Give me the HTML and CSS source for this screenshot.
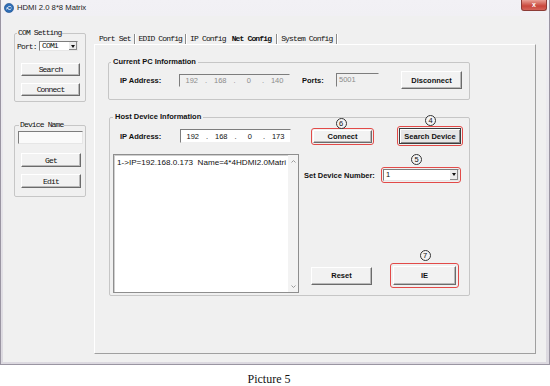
FILE: index.html
```html
<!DOCTYPE html>
<html lang="en">
<head>
    <meta charset="UTF-8">
    <meta name="viewport" content="width=device-width, initial-scale=1.0">
    <title>HDMI 2.0 8*8 Matrix</title>
    <link rel="stylesheet" href="styles.css">
</head>
<body>

    <div class="window">
        <div class="titlebar">
            <svg class="app-icon" width="10" height="10" viewBox="0 0 10 10">
                <circle cx="5" cy="5" r="4.6" fill="#2f6db6" stroke="#1d4f8c" stroke-width="0.6"/>
                <path d="M2.6 6.4 C3.4 3.2 6.4 2.8 7.4 4.2 M3 4.6 C4.2 6.8 6.4 7 7.3 5.6" fill="none" stroke="#fff" stroke-width="0.9"/>
            </svg>
            <span class="title">HDMI 2.0 8*8 Matrix</span>
            <div class="close">x</div>
        </div>

        <div class="client">
            <!-- serial port + device name -->
            <div class="sidebar">
                <fieldset class="group com-group">
                    <legend class="mono">COM Setting</legend>
                    <div class="port-row">
                        <span class="mono port-lbl">Port:</span>
                        <div class="combo com-combo"><span class="mono">COM1</span><i class="drop"></i></div>
                    </div>
                    <button class="btn mono side-btn first">Search</button>
                    <button class="btn mono side-btn">Connect</button>
                </fieldset>

                <fieldset class="group name-group">
                    <legend class="mono">Device Name</legend>
                    <div class="textbox"></div>
                    <button class="btn mono side-btn get">Get</button>
                    <button class="btn mono side-btn">Edit</button>
                </fieldset>
            </div>

            <div class="tabs-area">
                <div class="tabs mono">
                    <span class="tab">Port Set</span><span class="sep"></span>
                    <span class="tab">EDID Config</span><span class="sep"></span>
                    <span class="tab">IP Config</span>
                    <span class="tab active">Net Config</span><span class="sep"></span>
                    <span class="tab">System Config</span><span class="sep"></span>
                </div>

                <div class="panel">
                    <fieldset class="group pc-group">
                        <legend class="bold">Current PC Information</legend>
                        <div class="pc-row">
                            <span class="bold lbl">IP Address:</span>
                            <div class="ip off">
                                <span>192</span><b>.</b><span>168</span><b>.</b><span>0</span><b>.</b><span>140</span>
                            </div>
                            <span class="bold ports-lbl">Ports:</span>
                            <div class="port-field">5001</div>
                            <button class="btn bold disconnect">Disconnect</button>
                        </div>
                    </fieldset>

                    <fieldset class="group host-group">
                        <legend class="bold">Host Device Information</legend>
                        <div class="host-top">
                            <span class="bold lbl host-lbl">IP Address:</span>
                            <div class="ip">
                                <span>192</span><b>.</b><span>168</span><b>.</b><span>0</span><b>.</b><span>173</span>
                            </div>
                            <div class="mark connect-mark">
                                <span class="num n6">6</span>
                                <button class="btn bold">Connect</button>
                            </div>
                            <div class="mark search-mark">
                                <span class="num n4">4</span>
                                <button class="btn bold default">Search Device</button>
                            </div>
                        </div>

                        <div class="host-body">
                            <div class="listbox">
                                <div class="list-items">1-&gt;IP=192.168.0.173&nbsp;&nbsp;Name=4*4HDMI2.0Matri</div>
                                <div class="vscroll">
                                    <svg width="5" height="3" viewBox="0 0 5 3"><path d="M0.5 2.5 L2.5 0.5 L4.5 2.5" fill="none" stroke="#9a9a9a"/></svg>
                                    <svg width="5" height="3" viewBox="0 0 5 3"><path d="M0.5 0.5 L2.5 2.5 L4.5 0.5" fill="none" stroke="#9a9a9a"/></svg>
                                </div>
                            </div>

                            <div class="host-side">
                                <div class="devnum-row">
                                    <span class="bold devnum-lbl">Set Device Number:</span>
                                    <div class="mark combo-mark">
                                        <span class="num n5">5</span>
                                        <div class="combo num-combo"><span>1</span><i class="drop"></i></div>
                                    </div>
                                </div>
                                <div class="btn-row">
                                    <button class="btn bold reset">Reset</button>
                                    <div class="mark ie-mark">
                                        <span class="num n7">7</span>
                                        <button class="btn bold">IE</button>
                                    </div>
                                </div>
                            </div>
                        </div>
                    </fieldset>
                </div>
            </div>
        </div>
    </div>

    <p class="caption">Picture 5</p>

</body>
</html>
```

FILE: styles.css
```css
* { box-sizing: border-box; margin: 0; padding: 0; }
body {
    width: 550px;
    height: 386px;
    overflow: hidden;
    background: #fff;
    font-family: "Liberation Sans", Arial, sans-serif;
    color: #111;
}

.mono { font-family: "Liberation Mono", monospace; font-size: 8px; letter-spacing: -0.85px; }
.bold { font-family: "Liberation Sans", Arial, sans-serif; font-size: 7.5px; font-weight: bold; }

/* window frame */
.window {
    height: 365px;
    display: flex;
    flex-direction: column;
    background: linear-gradient(#f2f1f5, #dcd9e0);
    border: 1px solid #9a95a2;
    border-top: none;
    padding: 0 3px 2px 2px;
}

.titlebar {
    height: 16px;
    display: flex;
    align-items: flex-start;
}
.app-icon { margin: 3px 0 0 1px; }
.title { font-size: 7.7px; color: #222; margin: 3px 0 0 3px; line-height: 9px; }
.close {
    margin-left: auto;
    margin-right: -1px;
    width: 26px;
    height: 11px;
    background: linear-gradient(#e9a196, #c9473b 60%, #d5655a);
    border: 1px solid #8c3b35;
    border-top: none;
    border-radius: 0 0 3px 3px;
    color: #fff;
    font-size: 7px;
    font-weight: bold;
    text-align: center;
    line-height: 9px;
}

.client {
    flex: 1;
    display: flex;
    background: #f0f0f0;
}

/* group boxes */
.group {
    border: 1px solid #c6c6c6;
    border-radius: 2px;
    min-width: 0;
}
.group legend { line-height: 10px; padding: 0 1px; }

.sidebar { width: 91px; padding: 12px 0 0 11px; }

.com-group { width: 72px; padding: 0 2px 5px; }
.port-row { display: flex; align-items: center; height: 10px; margin-top: 3px; }
.port-lbl { width: 22px; }

.combo {
    display: flex;
    align-items: center;
    background: #fff;
    border: 1px solid;
    border-color: #7d7d7d #e6e6e6 #e6e6e6 #7d7d7d;
}
.combo span { flex: 1; padding-left: 2px; line-height: 8px; }
.drop {
    width: 9px;
    height: 100%;
    background: #ececec;
    border-left: 1px solid #fff;
    box-shadow: inset -1px -1px #8a8a8a;
    position: relative;
}
.drop::after {
    content: "";
    position: absolute;
    left: 2px;
    top: 3px;
    border: 2px solid transparent;
    border-top: 3px solid #111;
}
.com-combo { width: 39px; height: 10px; }

.btn {
    display: block;
    background: #f2f2f2;
    border: 1px solid;
    border-color: #fff #6b6b6b #6b6b6b #fff;
    box-shadow: inset -1px -1px #b9b9b9;
    color: #111;
}
.side-btn { width: 59px; height: 13px; margin: 7px 0 0 4px; }
.side-btn.first { margin-top: 12px; }

.name-group { width: 72px; margin-top: 18px; padding: 0 2px 8px; }
.name-group legend { margin-left: 2px; }
.textbox {
    width: 65px;
    height: 13px;
    margin: 1px 0 0 1px;
    background: #fafafa;
    border: 1px solid;
    border-color: #7d7d7d #e6e6e6 #e6e6e6 #7d7d7d;
}
.name-group .side-btn { width: 60px; height: 14px; }
.name-group .get { margin-top: 9px; }

/* tabs */
.tabs-area { width: 442px; display: flex; flex-direction: column; }
.tabs {
    height: 10px;
    margin-top: 18px;
    padding-left: 3px;
    display: flex;
    align-items: center;
}
.tab { padding: 0 2px; line-height: 10px; }
.tab.active { padding: 0 4px; font-weight: bold; }
.sep {
    width: 2px;
    height: 11px;
    margin: 0 1px;
    border-left: 1px solid #8a8a8a;
    border-right: 1px solid #fff;
}

.panel {
    height: 310px;
    border: 1px solid;
    border-color: #fff #a0a0a0 #a0a0a0 #fff;
    padding: 12px 0 0 13px;
}

.pc-group { width: 362px; padding: 0 0 10px; }
.pc-group legend { margin-left: 2px; padding: 0 2px; }
.pc-row { display: flex; align-items: center; height: 18px; margin-top: 4px; padding-left: 11px; }
.lbl { width: 59px; }

.ip {
    display: flex;
    align-items: center;
    width: 111px;
    height: 14px;
    background: #fff;
    border: 1px solid;
    border-color: #7d7d7d #f0f0f0 #f0f0f0 #7d7d7d;
    font-size: 7.5px;
}
.ip span { width: 24px; text-align: center; }
.ip b { width: 5px; text-align: center; font-weight: normal; }
.ip.off { height: 13px; background: #f0f0f0; color: #8c8c8c; }

.ports-lbl { width: 34px; margin-left: 12px; }
.port-field {
    width: 43px;
    height: 14px;
    padding: 1px 0 0 2px;
    border: 1px solid;
    border-color: #7d7d7d #f0f0f0 #f0f0f0 #7d7d7d;
    font-size: 7.5px;
    color: #8c8c8c;
}
.disconnect { width: 61px; height: 18px; margin-left: 22px; }

.host-group { width: 361px; margin: 12px 0 0 1px; padding: 0 0 2px; }
.host-group legend { margin-left: 3px; padding: 0 2px; }
.host-top { display: flex; align-items: center; height: 20px; margin-top: 4px; }
.host-lbl { width: 60px; margin-left: 10px; }

/* red annotation frames */
.mark {
    position: relative;
    display: flex;
    border: 1px solid #e24a48;
    border-radius: 3px;
    padding: 1px;
}
.mark .btn { width: 100%; height: 100%; }
.num {
    position: absolute;
    left: 50%;
    width: 11px;
    height: 11px;
    margin-left: -5px;
    border: 1px solid #333;
    border-radius: 50%;
    background: #f4f4f4;
    font-size: 7.5px;
    line-height: 9px;
    text-align: center;
    color: #111;
}
.n6 { bottom: 100%; margin-left: -7px; }
.n4 { bottom: calc(100% + 1px); }
.n5 { bottom: calc(100% + 3px); margin-left: -10px; }
.n7 { bottom: calc(100% + 3px); }

.connect-mark { width: 63px; height: 17px; margin-left: 20px; }
.search-mark { width: 66px; height: 20px; margin-left: 23px; }
.btn.default {
    border-color: #3c3c3c;
    background: #e6e6e6;
    box-shadow: inset 1px 1px #fff, inset -1px -1px #8c8c8c;
}

.host-body { display: flex; height: 139px; margin-top: 8px; padding-left: 3px; }
.listbox {
    width: 186px;
    display: flex;
    background: #fff;
    border: 1px solid #8e8e8e;
    box-shadow: inset 1px 1px #cfcfcf;
}
.list-items {
    flex: 1;
    white-space: nowrap;
    padding: 3px 0 0 3px;
    font-size: 8.1px;
    line-height: 10px;
}
.vscroll {
    width: 10px;
    background: #f3f3f3;
    display: flex;
    flex-direction: column;
    justify-content: space-between;
    align-items: center;
    padding: 5px 0 4px;
}

.host-side { flex: 1; display: flex; flex-direction: column; margin-left: 5px; }
.devnum-row { display: flex; align-items: center; margin-top: 13px; }
.devnum-lbl { width: 77px; }
.combo-mark { width: 80px; height: 16px; }
.num-combo { width: 100%; height: 100%; font-size: 7.5px; }
.num-combo .drop::after { top: 3px; }

.btn-row { display: flex; align-items: center; margin-top: auto; margin-bottom: 5px; }
.reset { width: 61px; height: 18px; margin-left: 7px; }
.ie-mark { width: 69px; height: 25px; margin-left: 18px; padding: 2px; }

.caption {
    font-family: "Liberation Serif", "Times New Roman", serif;
    font-size: 12px;
    line-height: 14px;
    margin-top: 7px;
    padding-right: 12px;
    text-align: center;
}
```
